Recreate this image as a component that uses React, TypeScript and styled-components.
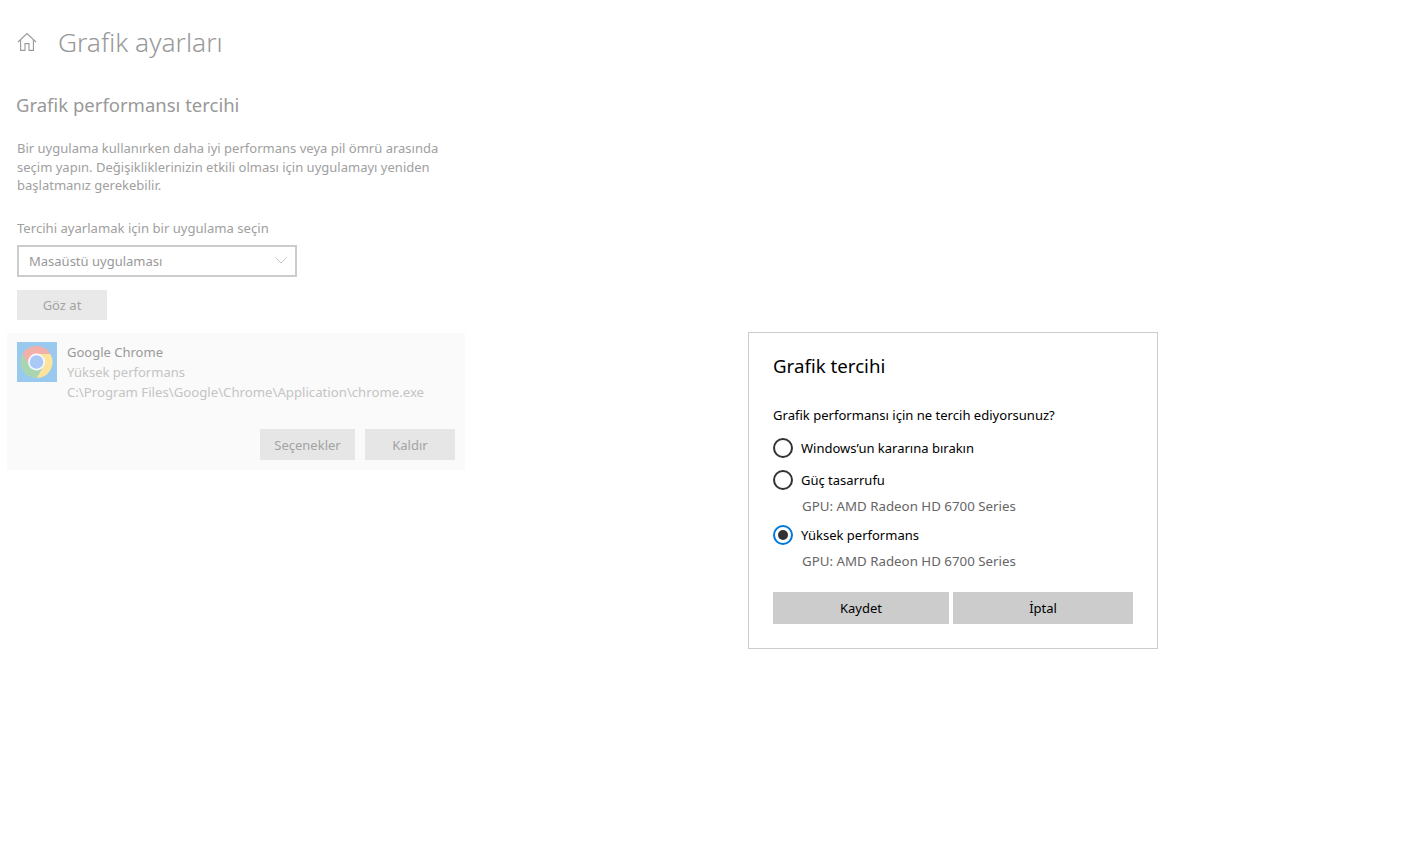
import React from 'react'
import styled, { createGlobalStyle } from 'styled-components'

const GlobalStyle = createGlobalStyle`
	html, body {
		margin: 0;
		padding: 0;
		background: #fff;
	}
	* {
		box-sizing: border-box;
	}
	body {
		font-family: 'Noto Sans', 'Open Sans', sans-serif;
	}
`

const HomeIcon = () => (
	<svg width="20" height="20" viewBox="0 0 20 20" fill="none" stroke="#9a9a9a" strokeWidth="1.1">
		<path d="M1 10 L10 1.6 L19 10" />
		<path d="M3.6 8 V18.4 H8 V11.6 H12 V18.4 H16.4 V8" />
	</svg>
)

const ChromeIcon = () => (
	<svg width="40" height="40" viewBox="0 0 40 40">
		<rect width="40" height="40" fill="#99c9ef" />
		<path d="M5.64 12 A16 16 0 0 1 33.36 12 H19.5 L12.57 24 Z" fill="#f3b0a9" />
		<path d="M33.36 12 A16 16 0 0 1 19.5 36 L26.43 24 L19.5 12 Z" fill="#fde39b" />
		<path d="M19.5 36 A16 16 0 0 1 5.64 12 L12.57 24 H26.43 Z" fill="#a9d6b1" />
		<circle cx="19.5" cy="20" r="8.5" fill="#f7f9fc" />
		<circle cx="19.5" cy="20" r="6.8" fill="#a9c8f6" />
	</svg>
)

const Chevron = () => (
	<svg width="12" height="7" viewBox="0 0 12 7" fill="none" stroke="#c4c4c4" strokeWidth="1">
		<path d="M0.5 0.5 L6 6 L11.5 0.5" />
	</svg>
)

export default function App() {
	return (
		<Page>
			<GlobalStyle />
			<Settings>
				<Header>
					<HomeIcon />
					<PageTitle>Grafik ayarları</PageTitle>
				</Header>
				<SectionTitle>Grafik performansı tercihi</SectionTitle>
				<Description>
					Bir uygulama kullanırken daha iyi performans veya pil ömrü arasında
					<br />
					seçim yapın. Değişikliklerinizin etkili olması için uygulamayı yeniden
					<br />
					başlatmanız gerekebilir.
				</Description>
				<FieldLabel>Tercihi ayarlamak için bir uygulama seçin</FieldLabel>
				<Select>
					<span>Masaüstü uygulaması</span>
					<Chevron />
				</Select>
				<BrowseButton>Göz at</BrowseButton>
				<AppCard>
					<AppRow>
						<ChromeIcon />
						<AppInfo>
							<AppName>Google Chrome</AppName>
							<AppMeta>Yüksek performans</AppMeta>
							<AppPath>C:\Program Files\Google\Chrome\Application\chrome.exe</AppPath>
						</AppInfo>
					</AppRow>
					<CardActions>
						<CardButton $width={95}>Seçenekler</CardButton>
						<CardButton $width={90}>Kaldır</CardButton>
					</CardActions>
				</AppCard>
			</Settings>

			<Dialog>
				<DialogTitle>Grafik tercihi</DialogTitle>
				<Question>Grafik performansı için ne tercih ediyorsunuz?</Question>
				<RadioRow $top={13}>
					<Radio />
					<RadioLabel>Windows’un kararına bırakın</RadioLabel>
				</RadioRow>
				<RadioRow $top={12}>
					<Radio />
					<RadioLabel>Güç tasarrufu</RadioLabel>
				</RadioRow>
				<GpuNote>GPU: AMD Radeon HD 6700 Series</GpuNote>
				<RadioRow $top={9}>
					<Radio $checked />
					<RadioLabel>Yüksek performans</RadioLabel>
				</RadioRow>
				<GpuNote>GPU: AMD Radeon HD 6700 Series</GpuNote>
				<DialogActions>
					<DialogButton $width={176}>Kaydet</DialogButton>
					<DialogButton $width={180}>İptal</DialogButton>
				</DialogActions>
			</Dialog>
		</Page>
	)
}

const Page = styled.div`
	position: relative;
	height: 863px;
	overflow: hidden;
	background: #fff;
`

const Settings = styled.div`
	display: flex;
	flex-direction: column;
	align-items: flex-start;
	width: 465px;
	padding: 22px 0 0 7px;
`

const Header = styled.div`
	display: flex;
	align-items: center;
	gap: 21px;
	height: 40px;
	padding-left: 10px;
`

const PageTitle = styled.h1`
	margin: 0;
	font-size: 26.3px;
	font-weight: 300;
	line-height: 40px;
	color: #999;
`

const SectionTitle = styled.h2`
	margin: 29px 0 0 9px;
	font-size: 18.5px;
	font-weight: 400;
	line-height: 28px;
	color: #999;
`

const Description = styled.p`
	margin: 20px 0 0 10px;
	font-size: 13.02px;
	font-weight: 400;
	line-height: 18.5px;
	color: #a0a0a0;
	white-space: nowrap;
`

const FieldLabel = styled.div`
	margin: 23px 0 0 10px;
	font-size: 13.1px;
	line-height: 20px;
	color: #a0a0a0;
`

const Select = styled.div`
	display: flex;
	align-items: center;
	justify-content: space-between;
	width: 280px;
	height: 32px;
	margin: 7px 0 0 10px;
	padding: 0 8px 0 10px;
	border: 2px solid #ccc;
	font-size: 13px;
	color: #999;
`

const BrowseButton = styled.div`
	display: flex;
	align-items: center;
	justify-content: center;
	width: 90px;
	height: 30px;
	margin: 13px 0 0 10px;
	background: #e9e9e9;
	font-size: 13px;
	color: #a3a3a3;
`

const AppCard = styled.div`
	display: flex;
	flex-direction: column;
	justify-content: space-between;
	width: 458px;
	height: 137px;
	margin-top: 13px;
	padding: 9px 10px 10px;
	background: #fafafa;
`

const AppRow = styled.div`
	display: flex;
	gap: 10px;
`

const AppInfo = styled.div`
	display: flex;
	flex-direction: column;
`

const AppName = styled.div`
	font-size: 13px;
	line-height: 20px;
	color: #999;
`

const AppMeta = styled.div`
	font-size: 13px;
	line-height: 20px;
	color: #c4c4c4;
	white-space: nowrap;
`

const AppPath = styled(AppMeta)`
	font-size: 13.2px;
`

const CardActions = styled.div`
	display: flex;
	justify-content: flex-end;
	gap: 10px;
`

const CardButton = styled.div<{ $width: number }>`
	display: flex;
	align-items: center;
	justify-content: center;
	width: ${p => p.$width}px;
	height: 31px;
	padding-top: 2px;
	background: #e6e6e6;
	font-size: 13px;
	color: #a3a3a3;
`

const Dialog = styled.div`
	position: absolute;
	left: 748px;
	top: 332px;
	display: flex;
	flex-direction: column;
	width: 410px;
	height: 317px;
	padding: 20px 24px 24px;
	background: #fff;
	border: 1px solid #ccc;
`

const DialogTitle = styled.h3`
	margin: 0;
	font-size: 18.7px;
	font-weight: 400;
	line-height: 26px;
	color: #000;
`

const Question = styled.div`
	margin-top: 26px;
	font-size: 13.05px;
	line-height: 20px;
	color: #000;
`

const RadioRow = styled.div<{ $top: number }>`
	display: flex;
	align-items: center;
	gap: 8px;
	height: 20px;
	margin-top: ${p => p.$top}px;
`

const Radio = styled.span<{ $checked?: boolean }>`
	display: flex;
	align-items: center;
	justify-content: center;
	width: 20px;
	height: 20px;
	border: 2px solid ${p => (p.$checked ? '#0078d7' : '#333')};
	border-radius: 50%;

	&::after {
		content: '';
		display: ${p => (p.$checked ? 'block' : 'none')};
		width: 10px;
		height: 10px;
		border-radius: 50%;
		background: #333;
	}
`

const RadioLabel = styled.span`
	font-size: 13px;
	line-height: 20px;
	color: #000;
`

const GpuNote = styled.div`
	margin: 6px 0 0 29px;
	font-size: 13.3px;
	line-height: 20px;
	color: #666;
`

const DialogActions = styled.div`
	display: flex;
	gap: 4px;
	margin-top: auto;
`

const DialogButton = styled.div<{ $width: number }>`
	display: flex;
	align-items: center;
	justify-content: center;
	width: ${p => p.$width}px;
	height: 32px;
	background: #ccc;
	font-size: 13px;
	color: #000;
`
